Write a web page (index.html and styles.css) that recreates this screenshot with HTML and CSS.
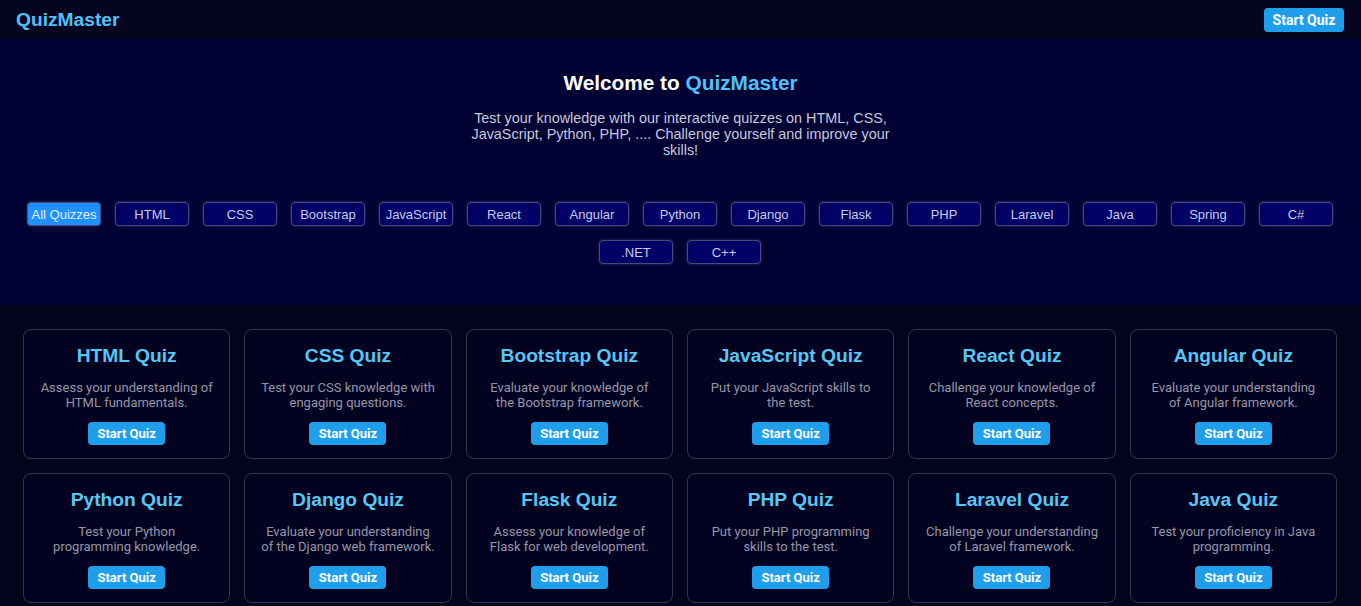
FILE: index.html
```html
<!DOCTYPE html>
<html lang="en">
<head>
<meta charset="utf-8">
<title>QuizMaster</title>
<link rel="stylesheet" href="styles.css">
</head>
<body>
<header class="topbar">
  <div class="logo">QuizMaster</div>
  <button class="btn btn-header">Start Quiz</button>
</header>
<section class="hero">
  <h2 class="hero-title">Welcome to <span class="accent">QuizMaster</span></h2>
  <p class="hero-text">Test your knowledge with our interactive quizzes on HTML, CSS, JavaScript, Python, PHP, .... Challenge yourself and improve your skills!</p>
  <div class="filters">
    <button class="filter active">All Quizzes</button>
    <button class="filter">HTML</button>
    <button class="filter">CSS</button>
    <button class="filter">Bootstrap</button>
    <button class="filter">JavaScript</button>
    <button class="filter">React</button>
    <button class="filter">Angular</button>
    <button class="filter">Python</button>
    <button class="filter">Django</button>
    <button class="filter">Flask</button>
    <button class="filter">PHP</button>
    <button class="filter">Laravel</button>
    <button class="filter">Java</button>
    <button class="filter">Spring</button>
    <button class="filter">C#</button>
    <button class="filter">.NET</button>
    <button class="filter">C++</button>
  </div>
</section>
<section class="cards">
  <div class="card"><h3 class="card-title">HTML Quiz</h3><p class="card-text">Assess your understanding of HTML fundamentals.</p><button class="btn btn-card">Start Quiz</button></div>
  <div class="card"><h3 class="card-title">CSS Quiz</h3><p class="card-text">Test your CSS knowledge with engaging questions.</p><button class="btn btn-card">Start Quiz</button></div>
  <div class="card"><h3 class="card-title">Bootstrap Quiz</h3><p class="card-text">Evaluate your knowledge of the Bootstrap framework.</p><button class="btn btn-card">Start Quiz</button></div>
  <div class="card"><h3 class="card-title">JavaScript Quiz</h3><p class="card-text">Put your JavaScript skills to the test.</p><button class="btn btn-card">Start Quiz</button></div>
  <div class="card"><h3 class="card-title">React Quiz</h3><p class="card-text">Challenge your knowledge of React concepts.</p><button class="btn btn-card">Start Quiz</button></div>
  <div class="card"><h3 class="card-title">Angular Quiz</h3><p class="card-text">Evaluate your understanding of Angular framework.</p><button class="btn btn-card">Start Quiz</button></div>
  <div class="card"><h3 class="card-title">Python Quiz</h3><p class="card-text">Test your Python programming knowledge.</p><button class="btn btn-card">Start Quiz</button></div>
  <div class="card"><h3 class="card-title">Django Quiz</h3><p class="card-text">Evaluate your understanding of the Django web framework.</p><button class="btn btn-card">Start Quiz</button></div>
  <div class="card"><h3 class="card-title">Flask Quiz</h3><p class="card-text">Assess your knowledge of Flask for web development.</p><button class="btn btn-card">Start Quiz</button></div>
  <div class="card"><h3 class="card-title">PHP Quiz</h3><p class="card-text">Put your PHP programming skills to the test.</p><button class="btn btn-card">Start Quiz</button></div>
  <div class="card"><h3 class="card-title">Laravel Quiz</h3><p class="card-text">Challenge your understanding of Laravel framework.</p><button class="btn btn-card">Start Quiz</button></div>
  <div class="card"><h3 class="card-title">Java Quiz</h3><p class="card-text">Test your proficiency in Java programming.</p><button class="btn btn-card">Start Quiz</button></div>
</section>
</body>
</html>
```

FILE: styles.css
```css
* { box-sizing: border-box; }
html, body { margin: 0; padding: 0; }
body {
  background: #03031c;
  font-family: "Liberation Sans", Arial, sans-serif;
  color: #ffffff;
  overflow: hidden;
}
.topbar {
  height: 39px;
  display: flex;
  align-items: center;
  justify-content: space-between;
  padding: 0 17px 0 16px;
  background: #05051f;
}
.logo {
  font-size: 19.2px;
  font-weight: bold;
  color: #4fc3f7;
}
.btn {
  border: none;
  border-radius: 4px;
  background: #1f9feb;
  color: #ffffff;
  font-family: Roboto, "Liberation Sans", sans-serif;
  font-weight: bold;
  cursor: pointer;
  padding: 0;
}
.btn-header {
  width: 80px;
  height: 24px;
  font-size: 14px;
}
.hero {
  background: #000033;
  padding: 32px 0 34px;
  text-align: center;
}
.hero-title {
  margin: 0;
  font-size: 20.8px;
  line-height: 24px;
  font-weight: bold;
  color: #ffffff;
}
.accent { color: #4fc3f7; }
.hero-text {
  width: 430px;
  margin: 15px auto 37px;
  font-size: 14.4px;
  line-height: 16px;
  color: #c9c9dc;
}
.filters {
  display: flex;
  flex-wrap: wrap;
  justify-content: center;
  padding-right: 1px;
}
.filter {
  width: 74px;
  height: 24px;
  margin: 7px;
  padding: 0;
  border: 1px solid #4a4a78;
  border-radius: 4px;
  background: #000066;
  color: #c8cbec;
  font-family: "Liberation Sans", Arial, sans-serif;
  font-size: 13px;
  box-shadow: 0 0 3px rgba(90, 90, 160, 0.6);
  cursor: pointer;
}
.filter.active {
  background: #1e90ff;
  color: #e6eeff;
}
.cards {
  display: grid;
  grid-template-columns: repeat(6, 1fr);
  gap: 14px;
  padding: 24px 24px 24px 23px;
  background: #03031c;
}
.card {
  border: 1px solid #35354f;
  border-radius: 8px;
  background: #020220;
  padding: 14px 15px 13px;
  text-align: center;
  display: flex;
  flex-direction: column;
  align-items: center;
}
.card-title {
  margin: 0;
  font-size: 19.2px;
  line-height: 23px;
  font-weight: bold;
  color: #55c8f5;
}
.card-text {
  margin: 13px 0 12px;
  font-family: Roboto, "Liberation Sans", sans-serif;
  font-size: 13px;
  line-height: 15px;
  color: #9696a8;
}
.btn-card {
  width: 77px;
  height: 23px;
  font-size: 13px;
}
```
